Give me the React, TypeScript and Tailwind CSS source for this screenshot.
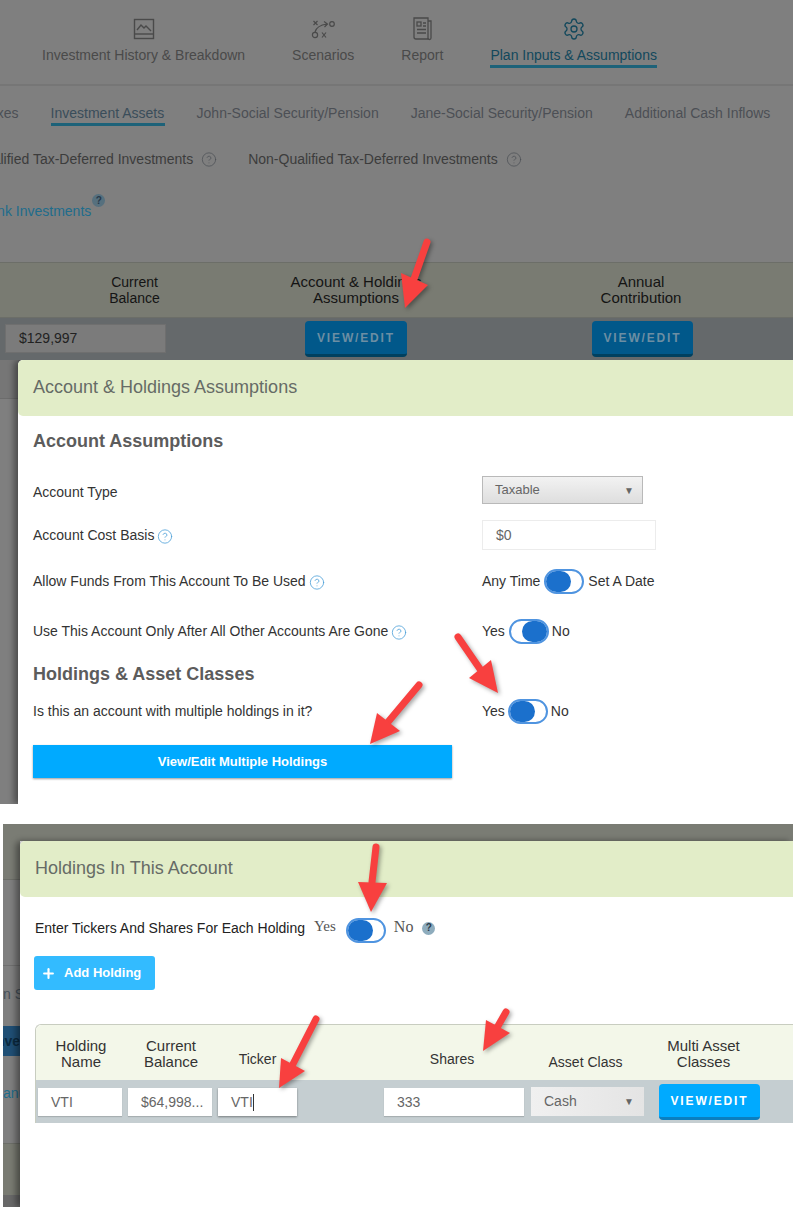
// App.tsx
import { CircleHelp, Plus, Settings } from "lucide-react";

const sans = "font-['Liberation_Sans',Arial,sans-serif]";

function ChartIcon() {
  return (
    <svg width="22" height="22" viewBox="0 0 22 22" fill="none" stroke="#4a4a4a" strokeWidth="1.4">
      <rect x="1.5" y="1.5" width="19" height="19" />
      <path d="M1.5 16h19" />
      <path d="M4 12l4-5 3 3 2-2 5 5" />
    </svg>
  );
}

function ScenarioIcon() {
  return (
    <svg width="24" height="20" viewBox="0 0 24 20" fill="none" stroke="#4a4a4a" strokeWidth="1.2">
      <path d="M2.500 2l4 4M6.500 2l-4 4" />
      <circle cx="21" cy="5" r="2.300" />
      <path d="M4 13c1-4 5-7 12-8M13 2.500l3.500 2.500-3 3" />
      <circle cx="4" cy="16" r="2.600" />
      <path d="M11 13.500l4 5M15 13.500l-4 5" />
    </svg>
  );
}

function ReportIcon() {
  return (
    <svg width="22" height="24" viewBox="0 0 22 24" fill="none" stroke="#4a4a4a" strokeWidth="1.3">
      <path d="M3 1h14v21H5a2 2 0 0 1-2-2z" />
      <path d="M17 4h3v17a1.500 1.500 0 0 1-3 0" />
      <rect x="6" y="5" width="4" height="4" />
      <path d="M12 6h3M12 9h3M6 12.500h9M6 16h9" />
    </svg>
  );
}

function NavItem({ icon, label, active }: { icon: React.ReactNode; label: string; active?: boolean }) {
  return (
    <div className="flex flex-col items-center">
      <div className="flex h-[26px] items-center justify-center">{icon}</div>
      <span className={`mt-[4px] border-b-[3px] text-[14px] leading-[19px] ${active ? "border-[#1d6279] text-[#12485c]" : "border-transparent text-[#4a4a4a]"}`}>
        {label}
      </span>
    </div>
  );
}

function Toggle({ side }: { side: "left" | "right" }) {
  return (
    <span className={`flex h-[25px] w-[40px] rounded-full border-2 border-[#4f94e0] bg-white ${side === "right" ? "justify-end" : "justify-start"}`}>
      <span className="h-[21px] w-[25px] rounded-full bg-[#1b70cc]" />
    </span>
  );
}

function Help() {
  return <CircleHelp className="mt-[2px] inline-block h-[17px] w-[16px] text-[#4b9fd8]" strokeWidth={1.2} />;
}

function DarkHelp({ color = "bg-[#6f8b9b]" }: { color?: string }) {
  return (
    <span className={`flex h-[13px] w-[13px] items-center justify-center rounded-full text-[10px] font-bold leading-none text-[#26394a] ${color}`}>?</span>
  );
}

function ModalHeader({ title }: { title: string }) {
  return (
    <div className="flex h-[56px] items-center rounded-l-[5px] bg-[#e2edc8] pb-[2px] pl-[15px] text-[18px] text-[#666b66]">
      {title}
    </div>
  );
}

function FormRow({ label, help, className, children }: { label: string; help?: boolean; className: string; children: React.ReactNode }) {
  return (
    <div className={`flex items-center text-[14px] text-[#333] ${className}`}>
      <div className="flex w-[449px] items-center gap-[3px]">
        <span>{label}</span>
        {help && <Help />}
      </div>
      {children}
    </div>
  );
}

function TableInput({ value, className, caret }: { value: string; className: string; caret?: boolean }) {
  return (
    <div className={`flex h-[28px] items-center bg-white pl-[13px] text-[14px] text-[#666] shadow-[0_1px_1px_rgba(0,0,0,0.15)] ${className}`}>
      {value}
      {caret && <span className="h-[17px] w-px bg-[#333]" />}
    </div>
  );
}

const arrows = [
  { tail: [427, 242], mid: [414, 279], tip: [405, 308], a: [401, 273], b: [428, 285] },
  { tail: [458, 637], mid: [480, 669], tip: [498, 693], a: [491, 660], b: [469, 678] },
  { tail: [419, 685], mid: [388, 722], tip: [370, 744], a: [377, 713], b: [400, 731] },
  { tail: [376, 847], mid: [372, 882], tip: [371, 912], a: [358, 882], b: [387, 883] },
  { tail: [316, 1019], mid: [293, 1064], tip: [279, 1088], a: [281, 1058], b: [305, 1071] },
  { tail: [506, 1012], mid: [498, 1026], tip: [483, 1051], a: [486, 1020], b: [510, 1033] },
];

export default function App() {
  return (
    <div className={`relative flex h-[1207px] w-[793px] flex-col overflow-hidden bg-white ${sans}`}>
      {/* Top page, dimmed */}
      <div className="h-[360px] shrink-0 overflow-hidden bg-[#7f7f7f]">
        <div className="flex h-[86px] items-start gap-[47px] border-b-[2px] border-[#767676] pl-[42px] pt-[16px]">
          <NavItem icon={<ChartIcon />} label="Investment History & Breakdown" />
          <NavItem icon={<ScenarioIcon />} label="Scenarios" />
          <NavItem icon={<ReportIcon />} label="Report" />
          <NavItem icon={<Settings size={24} strokeWidth={1.3} color="#12485c" />} label="Plan Inputs & Assumptions" active />
        </div>
        <div className="ml-[-18px] mt-[18px] flex gap-[32px] text-[14px] leading-[19px] text-[#4c4f55]">
          <span className="border-b-[3px] border-transparent">Taxes</span>
          <span className="w-[114px] whitespace-nowrap border-b-[3px] border-[#1d6279] text-[#3a4d5a]">Investment Assets</span>
          <span>John-Social Security/Pension</span>
          <span>Jane-Social Security/Pension</span>
          <span>Additional Cash Inflows</span>
        </div>
        <div className="ml-[-26px] mt-[24px] flex h-[19px] items-center text-[14px] leading-[19px] text-[#3c3c3c]">
          <span>Qualified Tax-Deferred Investments</span>
          <CircleHelp className="ml-[8px] h-[17px] w-[16px] text-[#4c4f55]" strokeWidth={1.1} />
          <span className="ml-[31px]">Non-Qualified Tax-Deferred Investments</span>
          <CircleHelp className="ml-[8px] h-[17px] w-[16px] text-[#4c4f55]" strokeWidth={1.1} />
        </div>
        <div className="ml-[-20px] mt-[24px] flex h-[28px] items-end text-[14px] leading-[19px] text-[#1e6c8c]">
          <span>Bank Investments</span>
          <span className="mb-[14px] ml-[1px]"><DarkHelp color="bg-[#56707e]" /></span>
        </div>
        <div className="mt-[41px] flex h-[56px] items-center border-y border-[#6c6e68] bg-[#797b72] text-center text-[14px] leading-[16px] text-[#141414]">
          <div className="w-[269px]">Current<br />Balance</div>
          <div className="w-[174px] whitespace-nowrap text-[15px]">Account &amp; Holdings<br />Assumptions</div>
          <div className="ml-[148px] w-[100px] text-[15px]">Annual<br />Contribution</div>
        </div>
        <div className="flex h-[42px] items-start bg-[#65696b]">
          <div className="ml-[5px] mt-[6px] flex h-[29px] w-[161px] items-center border border-[#6f6f6f] bg-[#7b7b7b] pl-[13px] text-[14px] text-[#222]">$129,997</div>
          <div className="ml-[139px] mt-[3px] flex h-[36px] w-[102px] items-center justify-center rounded-[4px] border-b-[3px] border-[#00405f] bg-[#01588a] text-[12px] font-bold tracking-[1.85px] text-[#6c8ea3]">VIEW/EDIT</div>
          <div className="ml-[185px] mt-[3px] flex h-[36px] w-[101px] items-center justify-center rounded-[4px] border-b-[3px] border-[#00405f] bg-[#01588a] text-[12px] font-bold tracking-[1.85px] text-[#6c8ea3]">VIEW/EDIT</div>
        </div>
      </div>

      {/* Account & Holdings Assumptions */}
      <div className="flex h-[444px] shrink-0 overflow-hidden bg-[#6f6f6f]">
        <div className="flex w-[18px] shrink-0 flex-col bg-[#7f7f7f]">
          <div className="h-[39px] border-b border-[#6c6c6c] bg-[#767676]" />
        </div>
        <div className="relative flex-1 rounded-tl-[5px] bg-white shadow-[-4px_0_6px_rgba(0,0,0,0.4)]">
          <ModalHeader title="Account & Holdings Assumptions" />
          <div className="pl-[15px]">
            <h2 className="mt-[13px] text-[18px] font-bold leading-[24px] text-[#5c5c5c]">Account Assumptions</h2>
            <FormRow label="Account Type" className="mt-[24px] h-[30px]">
              <div className="mt-[-4px] flex h-[28px] w-[161px] items-center justify-between border border-[#b9b9b9] bg-gradient-to-b from-[#f2f2f2] to-[#dedede] pl-[12px] pr-[8px] text-[13px] text-[#666]">
                Taxable<span className="text-[10px] text-[#666]">▼</span>
              </div>
            </FormRow>
            <FormRow label="Account Cost Basis" help className="mt-[13px] h-[30px]">
              <div className="flex h-[30px] w-[174px] items-center border border-[#ececec] bg-white pl-[13px] text-[14px] text-[#666]">$0</div>
            </FormRow>
            <FormRow label="Allow Funds From This Account To Be Used" help className="mt-[16px] h-[30px]">
              <span>Any Time</span>
              <span className="ml-[4px] mr-[4px]"><Toggle side="left" /></span>
              <span>Set A Date</span>
            </FormRow>
            <FormRow label="Use This Account Only After All Other Accounts Are Gone" help className="mt-[20px] h-[30px]">
              <span>Yes</span>
              <span className="ml-[4px] mr-[3px]"><Toggle side="right" /></span>
              <span>No</span>
            </FormRow>
            <h2 className="mt-[16px] text-[18px] font-bold leading-[24px] text-[#5c5c5c]">Holdings &amp; Asset Classes</h2>
            <FormRow label="Is this an account with multiple holdings in it?" className="mt-[12px] h-[26px]">
              <span>Yes</span>
              <span className="mx-[3px]"><Toggle side="left" /></span>
              <span>No</span>
            </FormRow>
            <div className="mt-[21px] flex h-[33px] w-[419px] items-center justify-center bg-[#00aaff] text-[13px] font-bold text-white shadow-[0_1px_2px_rgba(0,0,0,0.4)]">
              View/Edit Multiple Holdings
            </div>
          </div>
        </div>
      </div>

      <div className="h-[20px] shrink-0 bg-white" />

      {/* Holdings In This Account */}
      <div className="ml-[3px] flex flex-1 flex-col overflow-hidden">
        <div className="h-[17px] shrink-0 bg-[#7a7c74]" />
        <div className="flex flex-1">
          <div className="flex w-[17px] shrink-0 flex-col overflow-hidden bg-[#7f7f7f] text-[14px] text-[#444]">
            <div className="h-[39px] shrink-0 border-b border-[#6c6e68] bg-[#7a7c74]" />
            <div className="h-[86px] shrink-0 border-b border-[#6f6f6f]" />
            <div className="h-[60px] shrink-0 whitespace-nowrap pt-[19px] leading-[19px] text-[#46505a]">n Se</div>
            <div className="flex h-[30px] shrink-0 items-center justify-end bg-[#1f4f75] font-bold text-[#0c2a40]">nve</div>
            <div className="h-[87px] shrink-0 pt-[28px] leading-[19px] text-[#1e6c8c]">anu</div>
            <div className="h-[52px] shrink-0 border-t border-[#6c6e68] bg-[#797b72]" />
            <div className="flex-1 bg-[#686868]" />
          </div>
          <div className="relative flex-1 rounded-tl-[5px] bg-white shadow-[-4px_0_6px_rgba(0,0,0,0.4)]">
            <ModalHeader title="Holdings In This Account" />
            <div className="mt-[18px] flex h-[26px] items-center pl-[15px] text-[14px] text-[#222]">
              <span>Enter Tickers And Shares For Each Holding</span>
              <span className="ml-[9px] mt-[-3px] font-['Liberation_Serif',serif] text-[15px] text-[#555]">Yes</span>
              <span className="ml-[10px] mt-[4px]"><Toggle side="left" /></span>
              <span className="ml-[8px] mt-[-3px] font-['Liberation_Serif',serif] text-[16px] text-[#555]">No</span>
              <span className="ml-[9px]"><DarkHelp color="bg-[#8eacbd]" /></span>
            </div>
            <div className="ml-[14px] mt-[15px] flex h-[34px] w-[121px] items-center gap-[8px] rounded-[3px] bg-[#33bbff] pl-[7px] text-[13px] font-bold text-white">
              <Plus size={15} strokeWidth={3.4} />Add Holding
            </div>
            <div className="ml-[15px] mt-[34px] rounded-tl-[6px] border-l border-t border-[#c8cdc0]">
              <div className="flex h-[55px] items-center rounded-tl-[6px] bg-[#f3f7e9] pt-[2px] text-center text-[14px] leading-[16px] text-[#333]">
                <div className="w-[90px] text-[15px]">Holding<br />Name</div>
                <div className="w-[90px] text-[15px]">Current<br />Balance</div>
                <div className="w-[79px] pl-[4px] pt-[10px]">Ticker</div>
                <div className="ml-[87px] w-[140px] pt-[11px]">Shares</div>
                <div className="ml-[7px] w-[113px] pt-[16px]">Asset Class</div>
                <div className="ml-[11px] w-[101px] text-[15px]">Multi Asset<br />Classes</div>
              </div>
              <div className="flex h-[43px] items-start bg-[#c5ced1] pl-[2px]">
                <TableInput value="VTI" className="mt-[8px] w-[84px]" />
                <TableInput value="$64,998..." className="ml-[6px] mt-[8px] w-[84px]" />
                <TableInput value="VTI" caret className="ml-[6px] mt-[8px] w-[79px] shadow-[0_1px_2px_rgba(0,0,0,0.4)]" />
                <TableInput value="333" className="ml-[87px] mt-[8px] w-[140px]" />
                <div className="ml-[7px] mt-[7px] flex h-[29px] w-[113px] items-center justify-between bg-gradient-to-r from-[#f0f0f0] to-[#e4e4e4] pl-[13px] pr-[10px] text-[14px] text-[#666]">
                  Cash<span className="text-[10px]">▼</span>
                </div>
                <div className="ml-[15px] mt-[4px] flex h-[36px] w-[101px] items-center justify-center rounded-[4px] border-b-[3px] border-[#0a7fc0] bg-[#00aaff] text-[12px] font-bold tracking-[1.85px] text-white">VIEW/EDIT</div>
              </div>
            </div>
          </div>
        </div>
      </div>

      {/* Red annotation arrows */}
      <svg className="pointer-events-none absolute inset-0 drop-shadow-[2px_2px_2px_rgba(0,0,0,0.35)]" width="793" height="1207" viewBox="0 0 793 1207" fill="#f8403f">
        {arrows.map((a, i) => (
          <g key={i}>
            <line x1={a.tail[0]} y1={a.tail[1]} x2={a.mid[0]} y2={a.mid[1]} stroke="#f8403f" strokeWidth="7" strokeLinecap="round" />
            <polygon points={`${a.a[0]},${a.a[1]} ${a.tip[0]},${a.tip[1]} ${a.b[0]},${a.b[1]}`} />
          </g>
        ))}
      </svg>
    </div>
  );
}
